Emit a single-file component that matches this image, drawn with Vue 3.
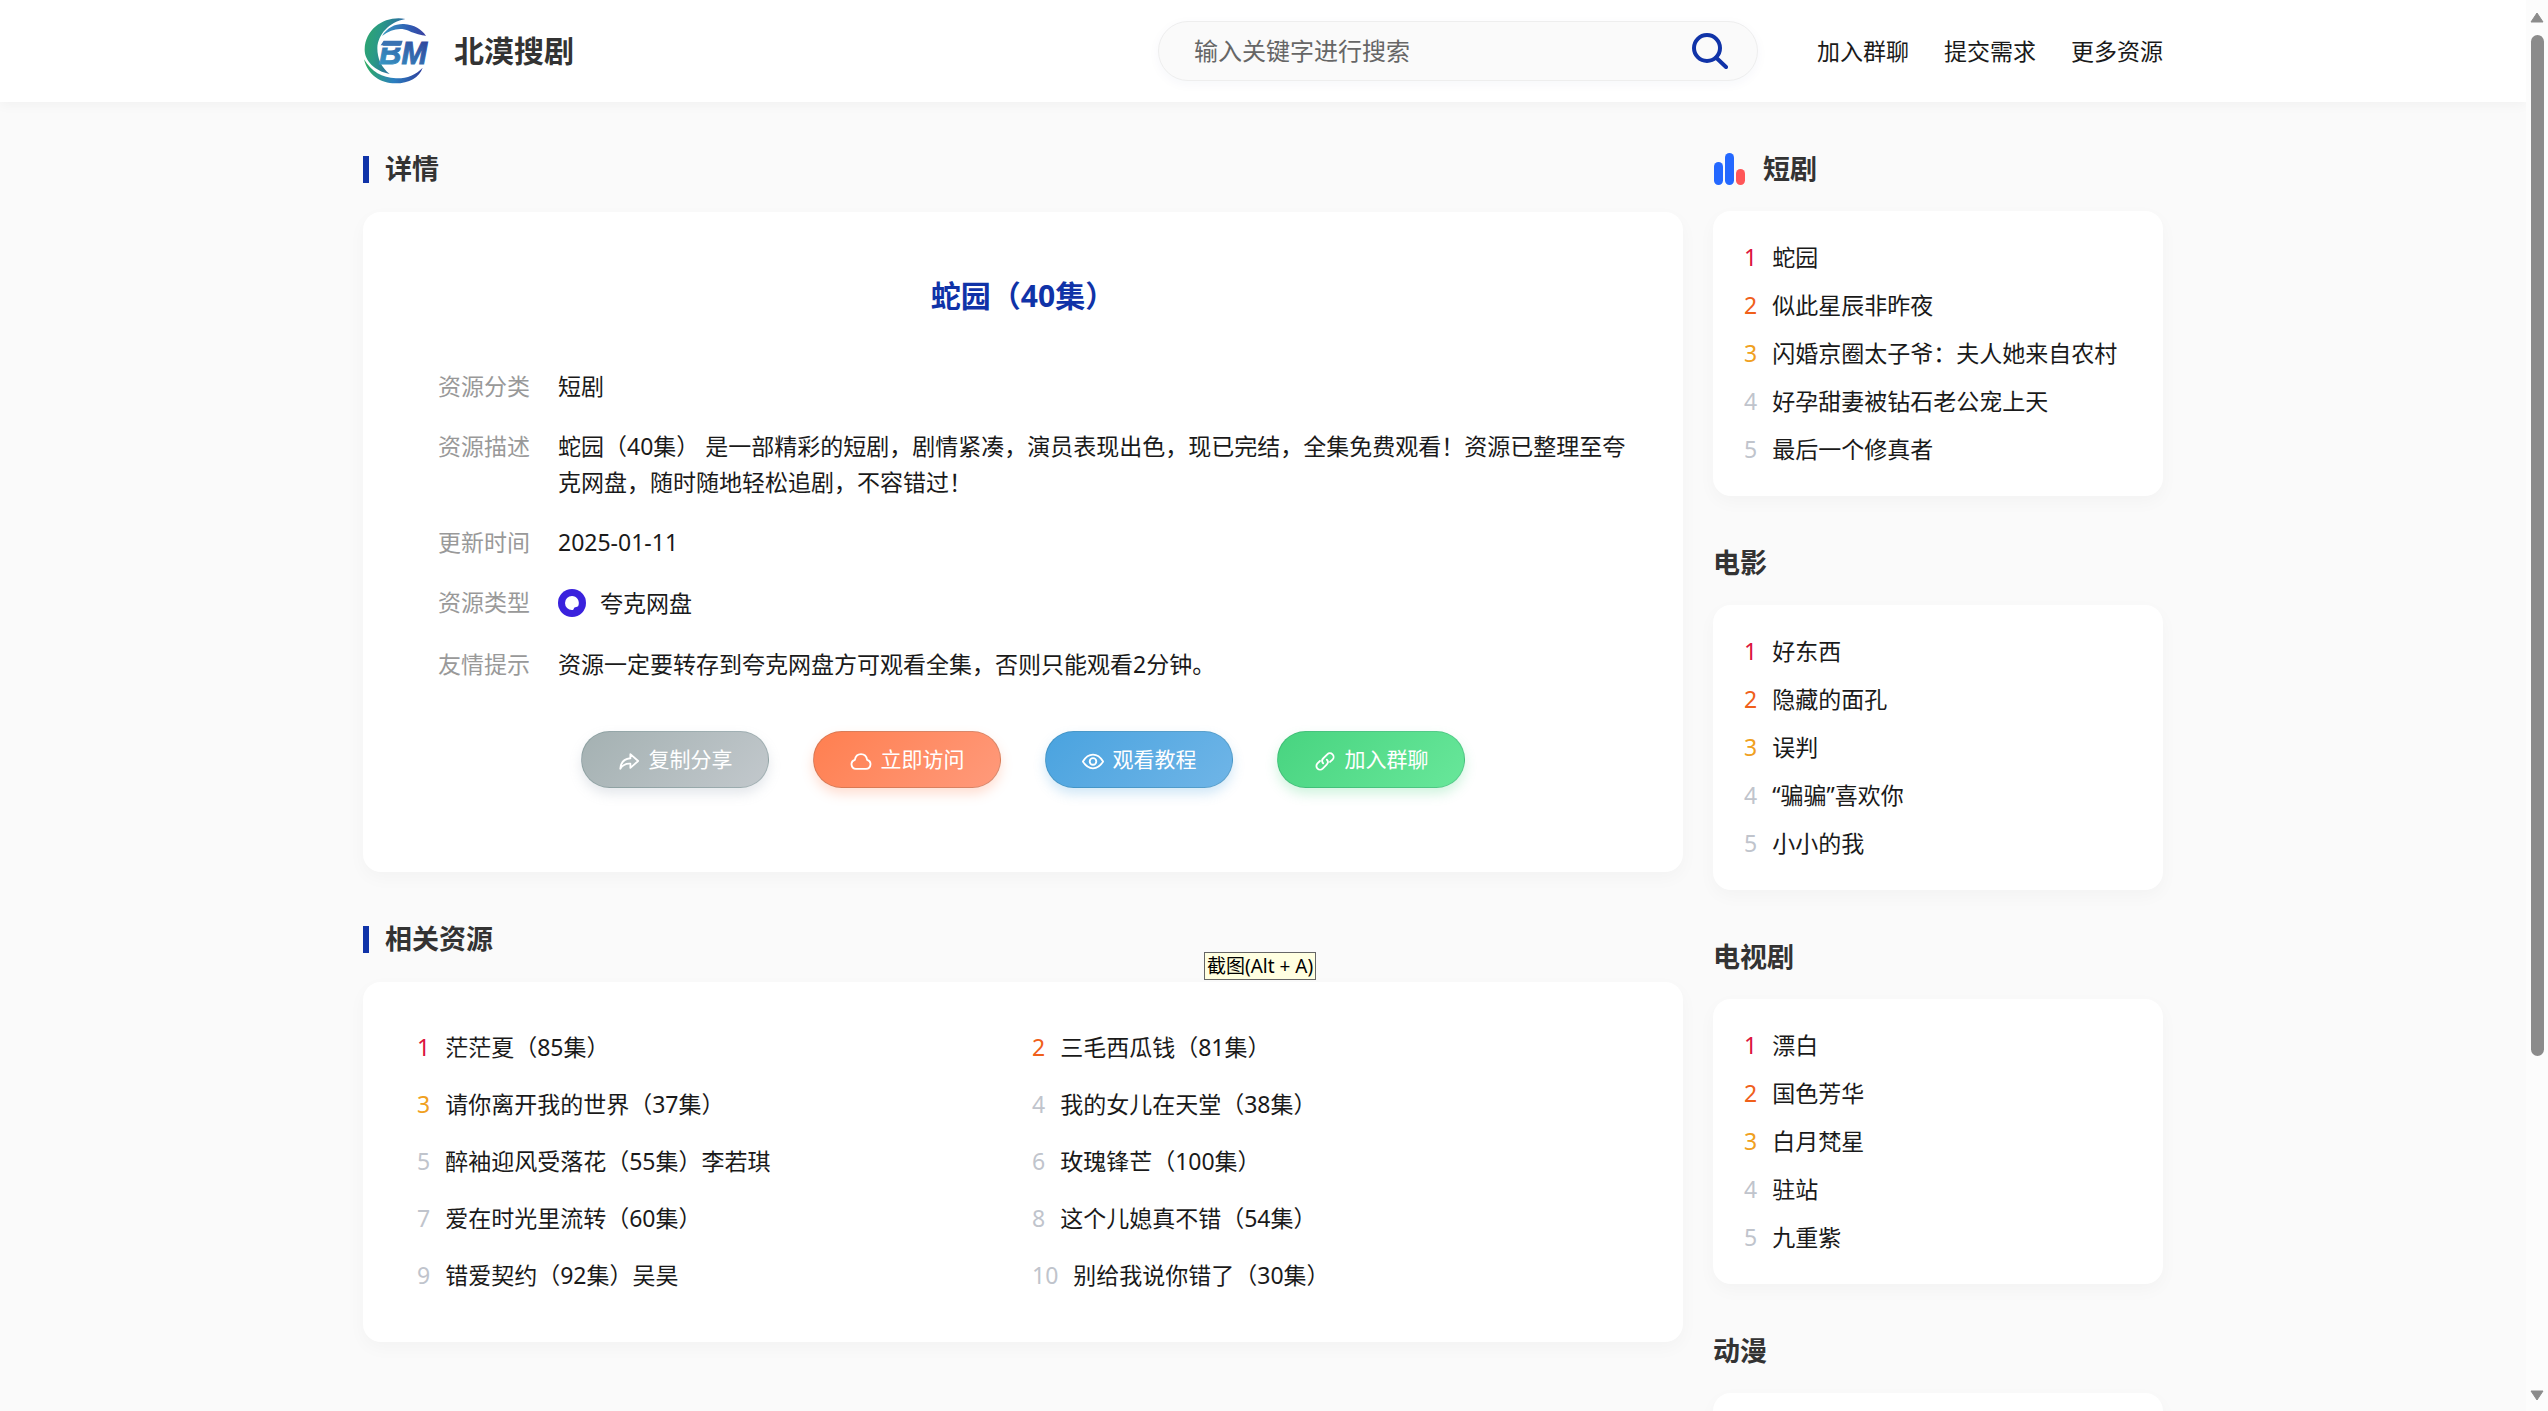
<script setup>
import { ref } from 'vue'

const keyword = ref('')

const menu = ['加入群聊', '提交需求', '更多资源']

const related = [
  '茫茫夏（85集）',
  '三毛西瓜钱（81集）',
  '请你离开我的世界（37集）',
  '我的女儿在天堂（38集）',
  '醉袖迎风受落花（55集）李若琪',
  '玫瑰锋芒（100集）',
  '爱在时光里流转（60集）',
  '这个儿媳真不错（54集）',
  '错爱契约（92集）吴昊',
  '别给我说你错了（30集）',
]

const ranks = [
  {
    title: '短剧',
    icon: true,
    items: ['蛇园', '似此星辰非昨夜', '闪婚京圈太子爷：夫人她来自农村', '好孕甜妻被钻石老公宠上天', '最后一个修真者'],
  },
  { title: '电影', items: ['好东西', '隐藏的面孔', '误判', '“骗骗”喜欢你', '小小的我'] },
  { title: '电视剧', items: ['漂白', '国色芳华', '白月梵星', '驻站', '九重紫'] },
  { title: '动漫', items: [] },
]
</script>

<template>
  <div class="page">
    <div class="view">
      <header class="header">
        <div class="container bar">
          <a class="brand" href="#">
            <svg class="logo" viewBox="69 54 198 198" aria-hidden="true">
              <defs>
                <linearGradient id="lg-left" x1="0" y1="0" x2="1" y2="0.3">
                  <stop offset="0" stop-color="#2fa86a" />
                  <stop offset="0.4" stop-color="#2a9a86" />
                  <stop offset="1" stop-color="#2b5fa8" />
                </linearGradient>
                <linearGradient id="lg-top" x1="0" y1="0" x2="1" y2="0">
                  <stop offset="0" stop-color="#3a9cc0" />
                  <stop offset="0.6" stop-color="#2f5fb4" />
                  <stop offset="1" stop-color="#3a3fa0" />
                </linearGradient>
                <linearGradient id="lg-bottom" x1="0" y1="0" x2="1" y2="0">
                  <stop offset="0" stop-color="#2eae5e" />
                  <stop offset="0.5" stop-color="#2b7fc0" />
                  <stop offset="1" stop-color="#2f3f9c" />
                </linearGradient>
                <linearGradient id="lg-text" x1="0" y1="1" x2="1" y2="0">
                  <stop offset="0" stop-color="#38a0c8" />
                  <stop offset="1" stop-color="#303c98" />
                </linearGradient>
              </defs>
              <path fill="url(#lg-left)" d="M196 57C140 46 76 82 74 148C73 182 104 214 149 222C124 202 112 176 112 144C114 102 148 66 196 57Z" />
              <path fill="url(#lg-top)" d="M126 108C142 82 166 71 192 72C222 74 246 88 258 108C244 104 226 102 206 92C180 82 152 88 126 108Z" />
              <path fill="url(#lg-bottom)" d="M72 178C84 226 122 250 166 250C208 250 238 232 248 203C226 226 200 236 168 235C126 234 94 214 72 178Z" />
              <text x="118" y="191" font-size="92" font-weight="700" font-style="italic" font-family="Liberation Sans, sans-serif" fill="url(#lg-text)" stroke="url(#lg-text)" stroke-width="3">BM</text>
              <path stroke="#fff" stroke-width="5" d="M122 140H190" />
              <path fill="#3a72b2" d="M131 122H188L184 136H122Z" />
            </svg>
            <span>北漠搜剧</span>
          </a>
          <form class="search" @submit.prevent>
            <input v-model="keyword" type="text" placeholder="输入关键字进行搜索" aria-label="搜索" />
            <button type="submit" aria-label="搜索">
              <svg viewBox="0 0 36 36" aria-hidden="true">
                <circle cx="15" cy="15" r="13" />
                <path d="M24.500 25L34 34" />
              </svg>
            </button>
          </form>
          <nav class="menu">
            <a v-for="m in menu" :key="m" href="#">{{ m }}</a>
          </nav>
        </div>
      </header>

      <main class="container body">
        <div class="main">
          <section>
            <h2 class="heading marked">详情</h2>
            <div class="card detail">
              <h1>蛇园（40集）</h1>
              <dl>
                <div><dt>资源分类</dt><dd>短剧</dd></div>
                <div>
                  <dt>资源描述</dt>
                  <dd>蛇园（40集） 是一部精彩的短剧，剧情紧凑，演员表现出色，现已完结，全集免费观看！资源已整理至夸克网盘，随时随地轻松追剧，不容错过！</dd>
                </div>
                <div><dt>更新时间</dt><dd>2025-01-11</dd></div>
                <div>
                  <dt>资源类型</dt>
                  <dd class="disk">
                    <svg viewBox="0 0 28 28" aria-hidden="true">
                      <circle cx="14" cy="14" r="14" fill="#3a22dd" />
                      <path fill="#fff" d="M14 7a7 7 0 1 0 0 14c1 0 1.600-.3 1.800-1.200.3-1.300 1-1.800 2.400-1.900 1.300-.1 1.800-.5 2.200-1.500A7 7 0 0 0 14 7Z" />
                    </svg>
                    夸克网盘
                  </dd>
                </div>
                <div><dt>友情提示</dt><dd>资源一定要转存到夸克网盘方可观看全集，否则只能观看2分钟。</dd></div>
              </dl>
              <div class="actions">
                <button type="button" class="gray">
                  <svg viewBox="0 0 24 24" aria-hidden="true"><path d="M13.500 4.500L22 12l-8.500 7.500V15C8.500 14.600 5 16.500 2.500 20.500 3 13.500 7 9.500 13.500 9Z" /></svg>
                  复制分享
                </button>
                <button type="button" class="orange">
                  <svg viewBox="0 0 24 24" aria-hidden="true"><path d="M6.500 20.500a5 5 0 0 1-1.200-9.800C6 6.800 8.600 4.500 12 4.500s6 2.300 6.700 6.200a5 5 0 0 1-1.200 9.800Z" /></svg>
                  立即访问
                </button>
                <button type="button" class="blue">
                  <svg viewBox="0 0 24 24" aria-hidden="true"><path d="M1 12.500C4 7.500 7.500 5 12 5s8 2.500 11 7.500C20 17.500 16.500 20 12 20s-8-2.500-11-7.500Z" /><circle cx="12" cy="12.500" r="3.600" /></svg>
                  观看教程
                </button>
                <button type="button" class="green">
                  <svg viewBox="0 0 24 24" aria-hidden="true"><path d="M10 14.500a4 4 0 0 1 .2-5.500l4.300-4.300a4 4 0 0 1 5.700 5.700L17.500 13M14 10.500a4 4 0 0 1-.2 5.500l-4.300 4.300a4 4 0 0 1-5.700-5.700L6.500 12" /></svg>
                  加入群聊
                </button>
              </div>
            </div>
          </section>

          <section>
            <h2 class="heading marked">相关资源</h2>
            <ol class="card related">
              <li v-for="(t, i) in related" :key="t">
                <span class="num" :class="'n' + (i + 1)">{{ i + 1 }}</span>
                <a href="#">{{ t }}</a>
              </li>
            </ol>
          </section>
        </div>

        <aside class="side">
          <section v-for="r in ranks" :key="r.title">
            <h2 class="heading">
              <svg v-if="r.icon" viewBox="0 0 32 32" aria-hidden="true">
                <rect x="1" y="9" width="9" height="23" rx="4.500" fill="#2468ff" />
                <rect x="12" y="0" width="9" height="32" rx="4.500" fill="#2468ff" />
                <rect x="23" y="16" width="9" height="16" rx="4.500" fill="#ff5658" />
              </svg>
              {{ r.title }}
            </h2>
            <ol class="card rank">
              <li v-for="(t, i) in r.items" :key="t">
                <span class="num" :class="'n' + (i + 1)">{{ i + 1 }}</span>
                <a href="#">{{ t }}</a>
              </li>
            </ol>
          </section>
        </aside>
      </main>
    </div>

    <div class="scrollbar" aria-hidden="true">
      <svg viewBox="0 0 14 11"><path d="M7 1L13 10H1Z" /></svg>
      <div class="track"><div class="thumb"></div></div>
      <svg viewBox="0 0 14 11"><path d="M7 10L13 1H1Z" /></svg>
    </div>

    <div class="tip" role="tooltip">截图(Alt + A)</div>
  </div>
</template>

<style>
body {
  margin: 0;
  background: #fafafa;
}
</style>

<style scoped>
* {
  box-sizing: border-box;
}
.page {
  position: relative;
  display: flex;
  height: 100vh;
  overflow: hidden;
  background: #fafafa;
  color: #1a1a1a;
  font-family: 'Noto Sans', 'Noto Sans CJK SC', sans-serif;
  font-size: 23px;
  line-height: 36px;
}
.view {
  flex: 1;
  min-width: 0;
}
.container {
  width: 100%;
  max-width: 1800px;
  margin: 0 auto;
}
a {
  color: inherit;
  text-decoration: none;
}
h1,
h2,
dl,
dd,
ol {
  margin: 0;
  padding: 0;
  list-style: none;
}
.header {
  background: #fff;
  box-shadow: 0 3px 12px rgba(0, 0, 0, 0.04);
}
.bar {
  display: flex;
  align-items: center;
  height: 102px;
}
.brand {
  display: flex;
  align-items: center;
  gap: 25px;
  margin-right: auto;
  color: #333;
  font-size: 30px;
  font-weight: 700;
}
.logo {
  width: 66px;
  height: 66px;
}
.search {
  display: flex;
  align-items: center;
  width: 600px;
  height: 60px;
  padding: 0 29px 0 35px;
  border: 1px solid #eee;
  border-radius: 30px;
  background: #fafafa;
  box-shadow: 0 3px 12px rgba(30, 60, 120, 0.04);
}
.search input {
  flex: 1;
  min-width: 0;
  padding: 0;
  border: 0;
  outline: 0;
  background: none;
  font: inherit;
  font-size: 24px;
}
.search input::placeholder {
  color: #666;
  opacity: 1;
}
.search button {
  display: flex;
  padding: 0;
  border: 0;
  background: none;
}
.search svg {
  width: 36px;
  height: 36px;
  fill: none;
  stroke: #1033a8;
  stroke-width: 4;
  stroke-linecap: round;
}
.menu {
  display: flex;
  gap: 35px;
  margin-left: 59px;
}
.body {
  display: flex;
  gap: 30px;
  padding-top: 46px;
}
.main {
  flex: 1;
  min-width: 0;
}
.side {
  width: 450px;
}
.heading {
  display: flex;
  align-items: center;
  gap: 18px;
  height: 42px;
  margin-bottom: 21px;
  color: #333;
  font-size: 27px;
  font-weight: 700;
}
.heading svg {
  width: 32px;
  height: 32px;
}
.marked {
  gap: 16px;
  margin-bottom: 22px;
}
.marked::before {
  content: '';
  width: 6px;
  height: 27px;
  background: #1033a8;
}
.card {
  border-radius: 18px;
  background: #fff;
  box-shadow: 0 6px 18px rgba(0, 0, 0, 0.03);
}
.main section,
.side section {
  margin-bottom: 46px;
}
.detail {
  padding: 60px 75px 84px;
}
.detail h1 {
  margin-bottom: 48px;
  color: #1033a8;
  font-size: 30px;
  line-height: 48px;
  text-align: center;
}
.detail dl {
  display: flex;
  flex-direction: column;
  gap: 24px;
  margin-right: -25px;
}
.detail dl > div {
  display: flex;
}
.detail dt {
  flex: none;
  width: 120px;
  color: #999;
}
.disk {
  display: flex;
  align-items: center;
  gap: 14px;
  height: 38px;
}
.disk svg {
  width: 28px;
  height: 28px;
}
.actions {
  display: flex;
  justify-content: center;
  gap: 44px;
  margin-top: 49px;
}
.actions button {
  display: flex;
  align-items: center;
  justify-content: center;
  gap: 9px;
  width: 188px;
  height: 57px;
  padding: 0 0 2px;
  border: 1px solid rgba(0, 60, 60, 0.15);
  border-radius: 29px;
  color: #fff;
  font: inherit;
  font-size: 21px;
}
.actions svg {
  width: 22px;
  height: 22px;
  margin-top: 5px;
  fill: none;
  stroke: #fff;
  stroke-width: 2;
  stroke-linejoin: round;
  stroke-linecap: round;
}
.gray {
  background: linear-gradient(135deg, #a4b1b2, #c2c8cc);
  box-shadow: 0 6px 12px rgba(150, 165, 180, 0.25);
}
.orange {
  background: linear-gradient(135deg, #ff7f50, #ff9a7b);
  box-shadow: 0 6px 12px rgba(255, 127, 80, 0.25);
}
.blue {
  background: linear-gradient(135deg, #4aa3df, #6fb5e7);
  box-shadow: 0 6px 12px rgba(74, 163, 223, 0.25);
}
.green {
  background: linear-gradient(135deg, #48d480, #68e79a);
  box-shadow: 0 6px 12px rgba(72, 212, 128, 0.25);
}
.related {
  display: grid;
  grid-template-columns: 1fr 1fr;
  padding: 36px 45px 39px;
}
.related li {
  display: flex;
  align-items: center;
  gap: 15px;
  height: 57px;
  padding-left: 9px;
}
.rank {
  min-height: 285px;
  padding: 22px 30px 23px 31px;
}
.rank li {
  display: flex;
  align-items: center;
  gap: 15px;
  height: 48px;
}
.num {
  color: #c0c4cc;
}
.n1 {
  color: #dc143c;
}
.n2 {
  color: #f0601a;
}
.n3 {
  color: #f0a020;
}
.scrollbar {
  display: flex;
  flex-direction: column;
  align-items: center;
  gap: 12px;
  width: 22px;
  padding: 12px 0 10px;
  background: #fcfcfc;
}
.scrollbar svg {
  width: 14px;
  height: 11px;
  fill: #8b8b8b;
  stroke: #8b8b8b;
  stroke-linejoin: round;
}
.track {
  flex: 1;
}
.thumb {
  width: 13px;
  height: 76%;
  border-radius: 7px;
  background: #8b8b8b;
}
.tip {
  position: absolute;
  top: 952px;
  left: 1204px;
  padding: 0 2px;
  border: 1px solid #666;
  background: #ffffe1;
  color: #000;
  font-size: 19px;
  line-height: 26px;
  white-space: nowrap;
}
</style>
